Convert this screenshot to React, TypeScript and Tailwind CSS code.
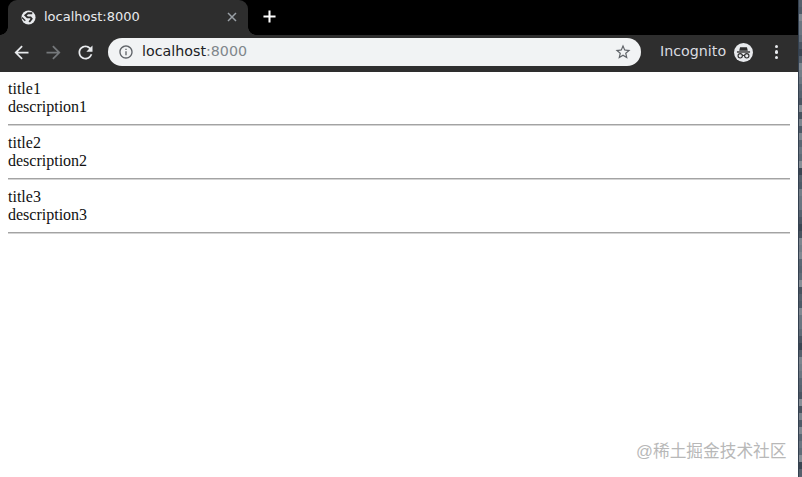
const items = [
  { title: "title1", description: "description1" },
  { title: "title2", description: "description2" },
  { title: "title3", description: "description3" },
];

// noisy desktop showing past the edge of the window
const strip = ["#55606c", "#6b7681", "#4a5562", "#7c858e", "#5a6673", "#868e96", "#4e5a67", "#6a7581", "#3a4552", "#747e88", "#56626f", "#48535f", "#808891", "#5f6b77"];

function Icon({ d, className }: { d: string; className: string }) {
  return (
    <svg viewBox="0 0 24 24" fill="currentColor" className={className}>
      <path d={d} />
    </svg>
  );
}

const BACK = "M20 11H7.83l5.59-5.59L12 4l-8 8 8 8 1.41-1.41L7.83 13H20v-2z";
const FORWARD = "M4 11h12.17l-5.59-5.59L12 4l8 8-8 8-1.41-1.41L16.17 13H4v-2z";
const RELOAD = "M17.65 6.35C16.2 4.9 14.21 4 12 4c-4.42 0-7.99 3.58-7.99 8s3.57 8 7.99 8c3.73 0 6.84-2.55 7.73-6h-2.08c-.82 2.33-3.04 4-5.65 4-3.31 0-6-2.69-6-6s2.69-6 6-6c1.66 0 3.14.69 4.22 1.78L13 11h7V4l-2.35 2.35z";
const INFO = "M11 7h2v2h-2zm0 4h2v6h-2zm1-9C6.48 2 2 6.48 2 12s4.48 10 10 10 10-4.48 10-10S17.52 2 12 2zm0 18c-4.41 0-8-3.59-8-8s3.59-8 8-8 8 3.59 8 8-3.59 8-8 8z";
const STAR = "M22 9.24l-7.19-.62L12 2 9.19 8.63 2 9.24l5.46 4.73L5.82 21 12 17.27 18.18 21l-1.63-7.03L22 9.24zM12 15.4l-3.76 2.27 1-4.28-3.32-2.88 4.38-.38L12 6.1l1.71 4.04 4.38.38-3.32 2.88 1 4.28L12 15.4z";

function GlobeIcon() {
  return (
    <svg viewBox="0 0 16 16" className="w-[15px] h-[15px] shrink-0">
      <circle cx="8" cy="8" r="7.5" fill="#e8eaed" />
      <path d="M12 3.4H7.4L4.6 5.6l2.2 2.3h3.4l1.2 1.5-2.6 3.4" fill="none" stroke="#2e2e2e" strokeWidth="2" />
      <path d="M1 8l3.6 3.4" stroke="#2e2e2e" strokeWidth="1.4" />
    </svg>
  );
}

function IncognitoIcon() {
  return (
    <svg viewBox="0 0 22 22" className="w-[19px] h-[19px] ml-2 shrink-0">
      <circle cx="11" cy="11" r="11" fill="#e8eaed" />
      <path d="M7 4.8h8l1 4.2H6z" fill="#2e2e2e" />
      <rect x="3.4" y="9.6" width="15.2" height="1.6" fill="#2e2e2e" />
      <circle cx="7.2" cy="14.8" r="2.5" fill="none" stroke="#2e2e2e" strokeWidth="1.3" />
      <circle cx="14.8" cy="14.8" r="2.5" fill="none" stroke="#2e2e2e" strokeWidth="1.3" />
      <path d="M9.6 14.4h2.8" stroke="#2e2e2e" strokeWidth="1.2" />
    </svg>
  );
}

export default function App() {
  return (
    <div className="relative flex w-[802px] h-[477px] overflow-hidden bg-white">
      <div className="flex flex-col w-[798px]">
        {/* Tab strip */}
        <div className="flex items-end h-[35px] pl-2 bg-black shrink-0">
          <div className="relative flex items-center w-[240px] h-[35px] pl-[13px] pr-[11px] pb-[1px] rounded-t-[9px] bg-[#2e2e2e] text-[#e8eaed] font-['DejaVu_Sans',sans-serif] text-[13px]">
            <span className="absolute left-[-8px] bottom-0 w-2 h-2 bg-[radial-gradient(circle_at_0_0,#000_7.5px,#2e2e2e_8px)]" />
            <span className="absolute right-[-8px] bottom-0 w-2 h-2 bg-[radial-gradient(circle_at_100%_0,#000_7.5px,#2e2e2e_8px)]" />
            <GlobeIcon />
            <span className="ml-[8px] flex-1">localhost:8000</span>
            <svg viewBox="0 0 10 10" className="w-[10px] h-[10px] text-[#9aa0a6]">
              <path d="M1 1l8 8M9 1l-8 8" stroke="currentColor" strokeWidth="1.5" />
            </svg>
          </div>
          <svg viewBox="0 0 14 14" className="w-[13px] h-[13px] ml-[15px] mb-[12px] text-white">
            <path d="M7 0.5v13M0.5 7h13" stroke="currentColor" strokeWidth="2.2" />
          </svg>
        </div>

        {/* Toolbar */}
        <div className="flex items-center h-[37px] pl-[10.5px] pb-[3px] bg-[#2e2e2e] shrink-0">
          <Icon d={BACK} className="w-[21px] h-[21px] text-[#e8eaed]" />
          <Icon d={FORWARD} className="w-[21px] h-[21px] ml-[11px] text-[#75787b]" />
          <Icon d={RELOAD} className="w-[21px] h-[21px] ml-[11px] text-[#e8eaed]" />
          <div className="flex items-center w-[533px] h-[28px] ml-[12.5px] pl-[10px] pr-[9px] rounded-full bg-[#f1f3f4] font-['DejaVu_Sans',sans-serif] text-[14.25px]">
            <Icon d={INFO} className="w-[16px] h-[16px] text-[#5f6368]" />
            <span className="ml-[8px] flex-1 text-[#202124]">
              localhost<span className="text-[#80868b]">:8000</span>
            </span>
            <Icon d={STAR} className="w-[18px] h-[18px] text-[#5f6368]" />
          </div>
          <span className="ml-[19px] text-[#dadce0] font-['DejaVu_Sans',sans-serif] text-[14.25px]">Incognito</span>
          <IncognitoIcon />
          <div className="flex flex-col gap-[2px] ml-[21.5px]">
            <div className="w-[3.5px] h-[3.5px] rounded-full bg-[#e8eaed]" />
            <div className="w-[3.5px] h-[3.5px] rounded-full bg-[#e8eaed]" />
            <div className="w-[3.5px] h-[3.5px] rounded-full bg-[#e8eaed]" />
          </div>
        </div>

        {/* Page */}
        <div className="flex-1 p-2 font-['Liberation_Serif',serif] text-[16px] leading-[18px] text-[#111111]">
          {items.map((item) => (
            <div key={item.title}>
              <div>{item.title}</div>
              <div>{item.description}</div>
              <div className="my-2 h-[2px] border-t border-t-[#a3a3a3] border-b border-b-[#d4d4d4]" />
            </div>
          ))}
        </div>
      </div>

      <div className="flex flex-col w-[4px] border-l border-l-[#33404f] bg-[#5a6673]">
        {Array.from({ length: 68 }).map((_, i) => (
          <div key={i} className="h-[7px] shrink-0" style={{ backgroundColor: strip[(i * 5 + (i % 3)) % strip.length] }} />
        ))}
      </div>

      <span className="absolute left-[636px] top-[439px] text-[16.7px] leading-[25px] text-[#b8b8b8] font-['Liberation_Sans','Noto_Sans_CJK_SC',sans-serif]">
        @稀土掘金技术社区
      </span>
    </div>
  );
}
